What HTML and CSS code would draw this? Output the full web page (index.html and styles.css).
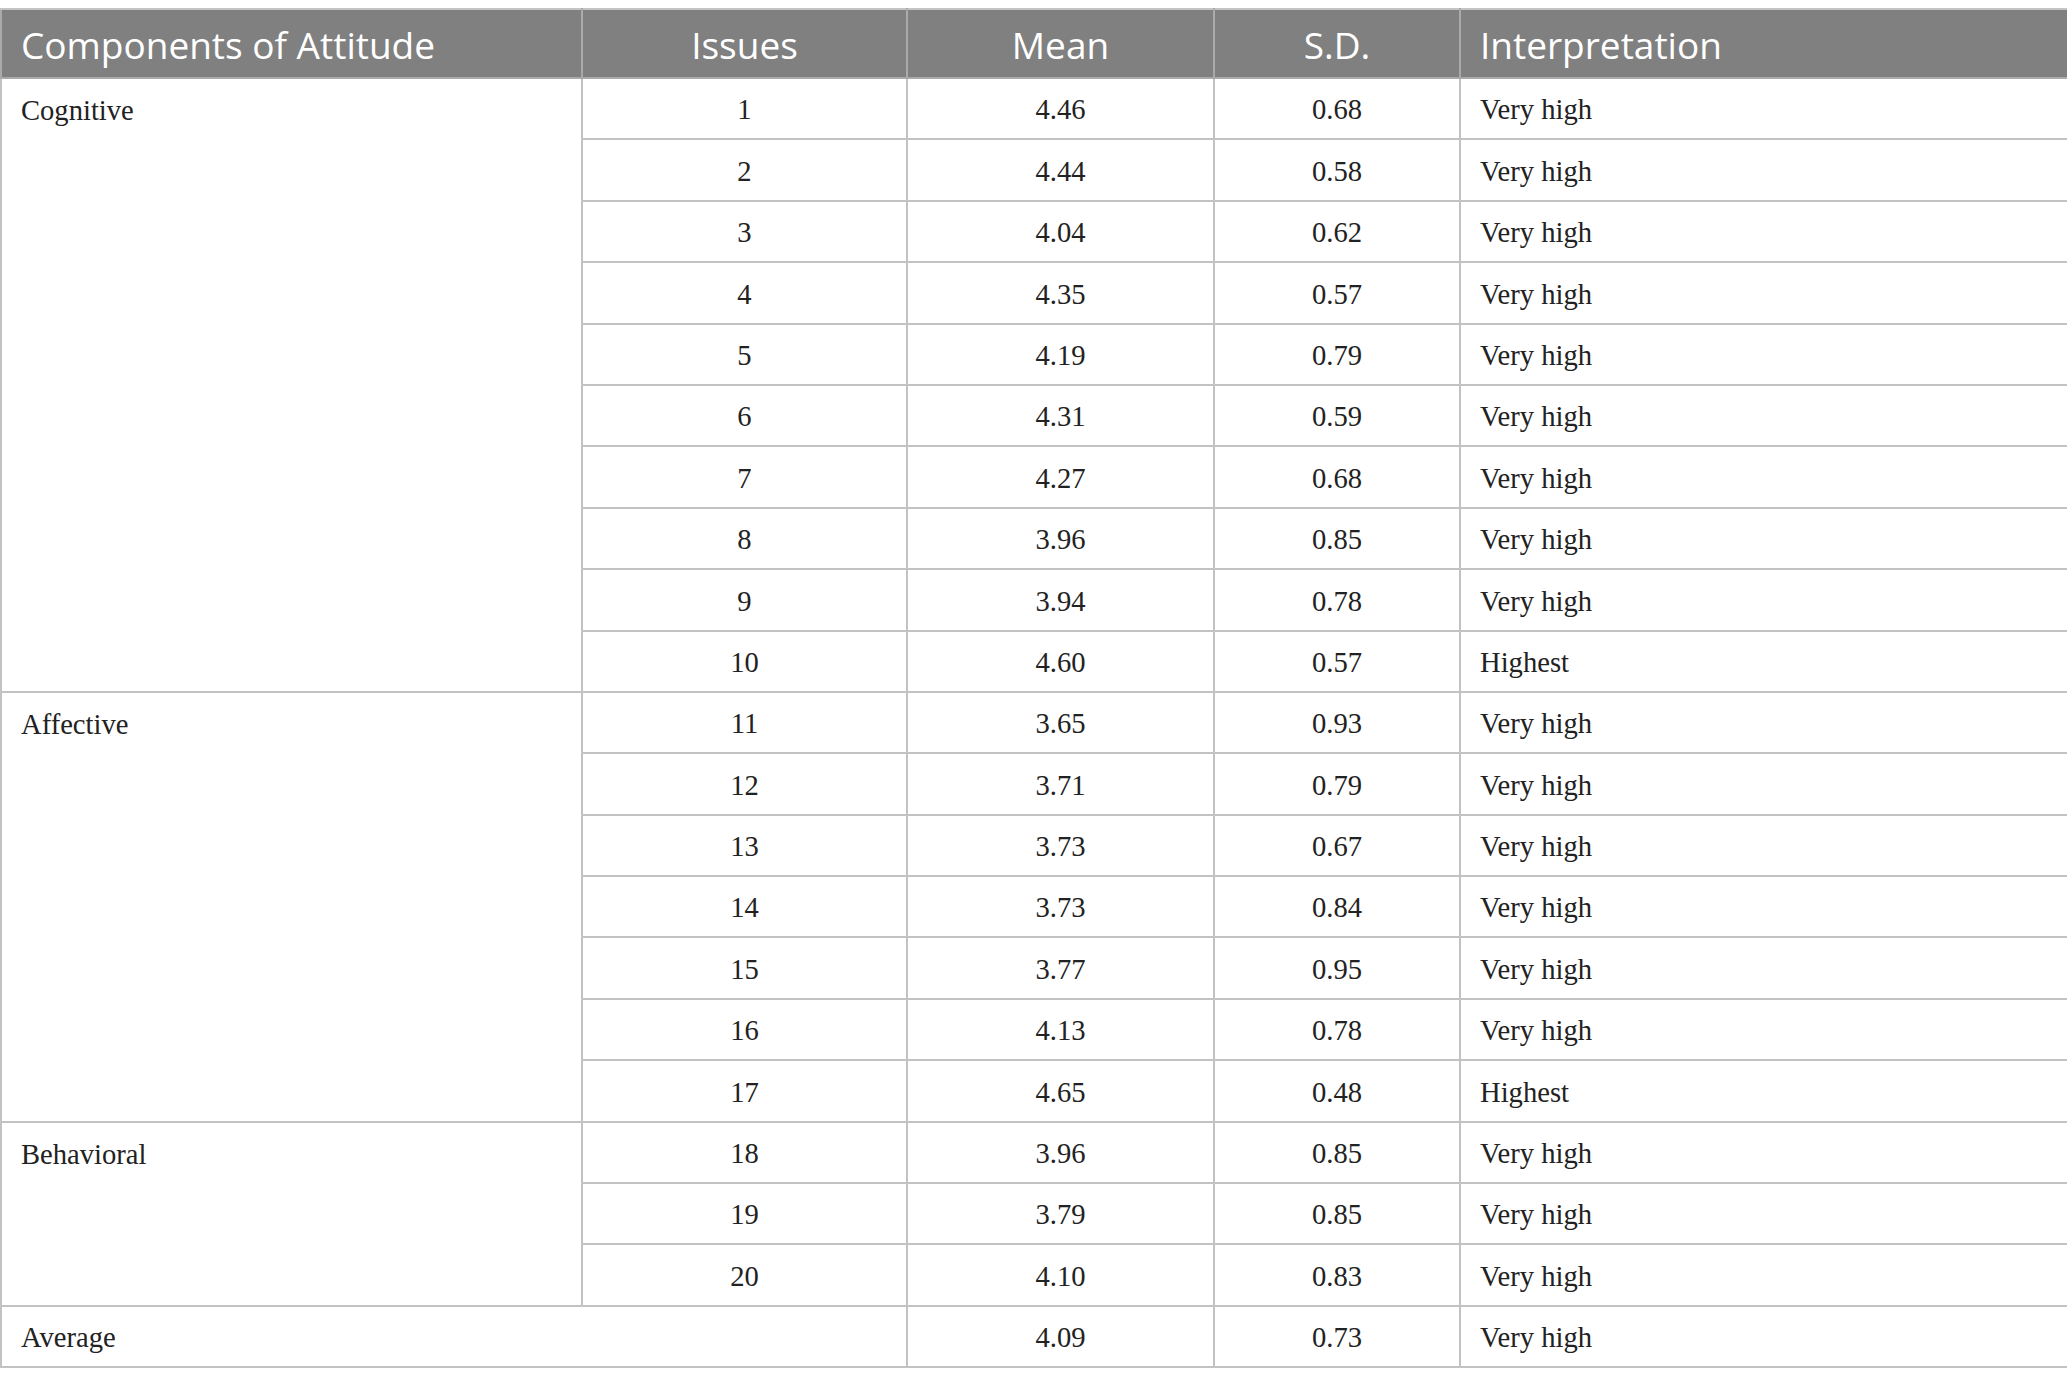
FILE: index.html
```html
<!DOCTYPE html>
<html>
<head>
<meta charset="utf-8">
<link rel="stylesheet" href="styles.css">
</head>
<body>
<table class="data">
<colgroup>
<col class="c1"><col class="c2"><col class="c3"><col class="c4"><col class="c5">
</colgroup>
<thead>
<tr><th class="left">Components of Attitude</th><th>Issues</th><th>Mean</th><th>S.D.</th><th class="left">Interpretation</th></tr>
</thead>
<tbody>
<tr><td class="left top" rowspan="10">Cognitive</td><td>1</td><td>4.46</td><td>0.68</td><td class="left">Very high</td></tr>
<tr><td>2</td><td>4.44</td><td>0.58</td><td class="left">Very high</td></tr>
<tr><td>3</td><td>4.04</td><td>0.62</td><td class="left">Very high</td></tr>
<tr><td>4</td><td>4.35</td><td>0.57</td><td class="left">Very high</td></tr>
<tr><td>5</td><td>4.19</td><td>0.79</td><td class="left">Very high</td></tr>
<tr><td>6</td><td>4.31</td><td>0.59</td><td class="left">Very high</td></tr>
<tr><td>7</td><td>4.27</td><td>0.68</td><td class="left">Very high</td></tr>
<tr><td>8</td><td>3.96</td><td>0.85</td><td class="left">Very high</td></tr>
<tr><td>9</td><td>3.94</td><td>0.78</td><td class="left">Very high</td></tr>
<tr><td>10</td><td>4.60</td><td>0.57</td><td class="left">Highest</td></tr>
<tr><td class="left top" rowspan="7">Affective</td><td>11</td><td>3.65</td><td>0.93</td><td class="left">Very high</td></tr>
<tr><td>12</td><td>3.71</td><td>0.79</td><td class="left">Very high</td></tr>
<tr><td>13</td><td>3.73</td><td>0.67</td><td class="left">Very high</td></tr>
<tr><td>14</td><td>3.73</td><td>0.84</td><td class="left">Very high</td></tr>
<tr><td>15</td><td>3.77</td><td>0.95</td><td class="left">Very high</td></tr>
<tr><td>16</td><td>4.13</td><td>0.78</td><td class="left">Very high</td></tr>
<tr><td>17</td><td>4.65</td><td>0.48</td><td class="left">Highest</td></tr>
<tr><td class="left top" rowspan="3">Behavioral</td><td>18</td><td>3.96</td><td>0.85</td><td class="left">Very high</td></tr>
<tr><td>19</td><td>3.79</td><td>0.85</td><td class="left">Very high</td></tr>
<tr><td>20</td><td>4.10</td><td>0.83</td><td class="left">Very high</td></tr>
<tr><td class="left" colspan="2">Average</td><td>4.09</td><td>0.73</td><td class="left">Very high</td></tr>
</tbody>
</table>
</body>
</html>
```
FILE: styles.css
```css
html, body {
  margin: 0;
  padding: 0;
  background: #ffffff;
}
body {
  padding-top: 8px;
}
.data {
  border-collapse: collapse;
  table-layout: fixed;
  width: 2067px;
  font-family: "Liberation Serif", "Times New Roman", serif;
  font-size: 28.6px;
  color: #222222;
}
.c1 { width: 581px; }
.c2 { width: 325px; }
.c3 { width: 307px; }
.c4 { width: 246px; }
.c5 { width: 608px; }
.data th {
  background: #7f807f;
  color: #ffffff;
  font-family: "Open Sans", "Noto Sans", sans-serif;
  font-weight: 400;
  font-size: 37px;
  height: 69px;
  padding: 2px 19px 0 19px;
  box-sizing: border-box;
  text-align: center;
  vertical-align: middle;
  border: 2px solid #a9aaa9;
  border-top-color: #c4c4c4;
  line-height: 1;
}
.data td {
  height: 61.4px;
  box-sizing: border-box;
  padding: 4px 19px 0 19px;
  text-align: center;
  vertical-align: middle;
  border: 2px solid #c2c2c2;
  line-height: 1;
}
.data .left {
  text-align: left;
}
.data td.top {
  vertical-align: top;
  padding-top: 18px;
}
```
